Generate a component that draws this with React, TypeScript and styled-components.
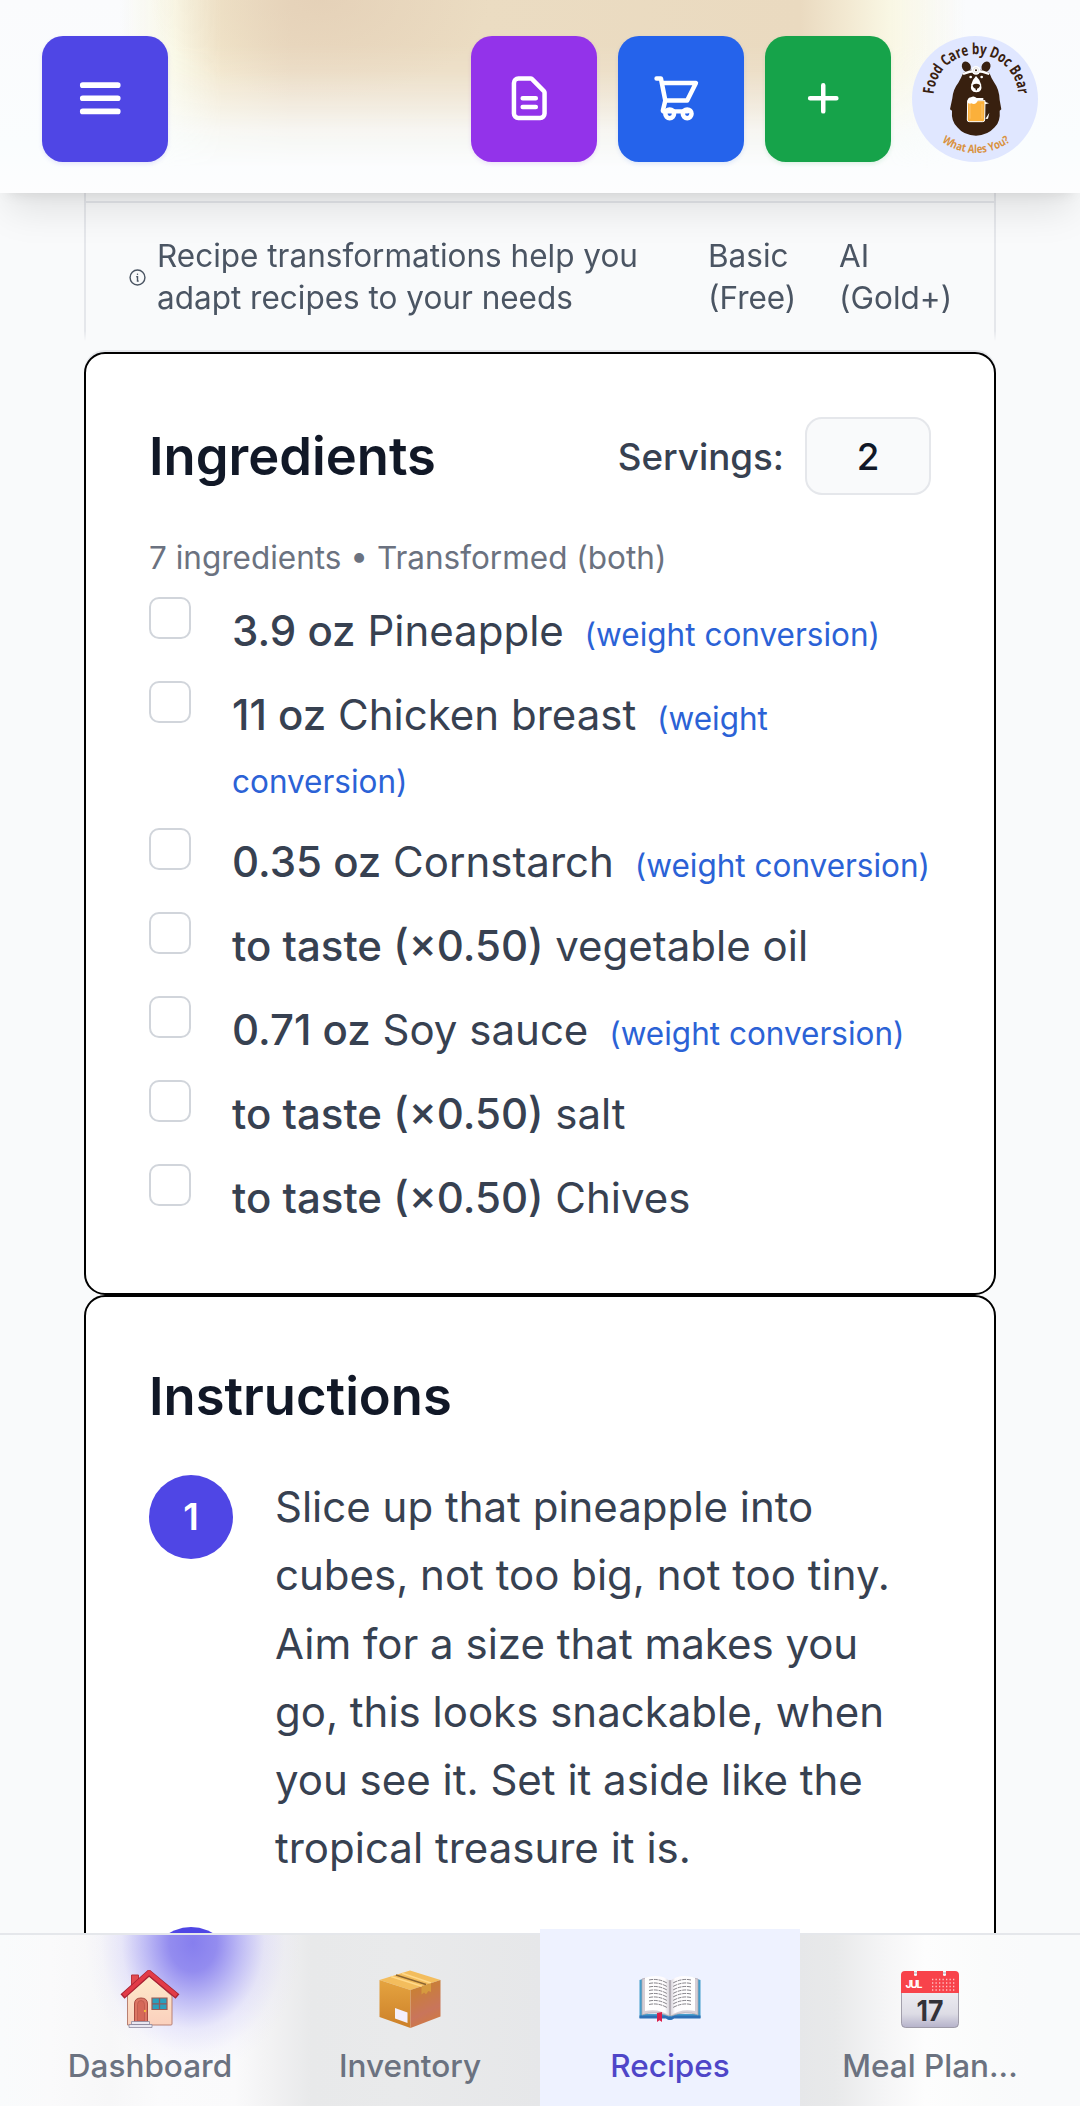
import React from "react";
import styled, { createGlobalStyle, css } from "styled-components";

const GlobalStyle = createGlobalStyle`
  *, *::before, *::after { box-sizing: border-box; }
  body { margin: 0; background: #f9fafb; }
`;

const Screen = styled.div`
  width: 1080px;
  height: 2106px;
  overflow: hidden;
  display: flex;
  flex-direction: column;
  background: #f9fafb;
  font-family: Inter, "Liberation Sans", sans-serif;
  color: #374151;
`;

/* ---------- top bar ---------- */

const TopBar = styled.header`
  position: relative;
  z-index: 2;
  flex: none;
  height: 193px;
  padding: 36px 42px 0;
  display: flex;
  justify-content: space-between;
  background: linear-gradient(#fafbfd, #fafdfe 75%, #fdfdfe);
  box-shadow: 0 25px 36px -8px rgba(0, 0, 0, 0.1), 0 8px 13px -8px rgba(0, 0, 0, 0.1);
`;

const PhotoGlow = styled.div`
  position: absolute;
  inset: 0;
  background:
    radial-gradient(ellipse 170px 100px at 320px 0, rgba(225, 203, 178, 0.6), transparent),
    linear-gradient(90deg, transparent 120px, rgba(249, 247, 226, 0.85) 175px, #f1e5ca 222px,
      #ebdbc2 290px, #ebdcc2 480px, #eadac0 800px, #f3ead3 850px, #f9f7e4 890px, transparent 965px);
  mask-image: linear-gradient(#000 45px, rgba(0, 0, 0, 0.88) 72px, rgba(0, 0, 0, 0.58) 100px,
    rgba(0, 0, 0, 0.2) 130px, transparent 168px);
`;

const Actions = styled.div`
  position: relative;
  display: flex;
  gap: 21px;
`;

const ActionButton = styled.button<{ $color: string; $stroke?: number }>`
  position: relative;
  width: 126px;
  height: 126px;
  padding: 0 10px 2px 0;
  border: 0;
  border-radius: 21px;
  display: grid;
  place-items: center;
  color: #fff;
  background: ${(p) => p.$color};
  box-shadow: 0 2px 4px ${(p) => p.$color}20;

  svg {
    width: 52.5px;
    height: 52.5px;
    fill: none;
    stroke: currentColor;
    stroke-width: ${(p) => p.$stroke ?? 2.05};
    stroke-linecap: round;
    stroke-linejoin: round;
  }
`;

const Avatar = styled.svg`
  width: 126px;
  height: 126px;
  display: block;
`;

/* ---------- scrolled page ---------- */

const Page = styled.main`
  flex: 1;
  min-height: 0;
  overflow: hidden;
  padding: 0 84px;
`;

const TransformPanel = styled.aside`
  height: 159px;
  padding-top: 8px;
  border: solid #e5e7eb;
  border-width: 0 2px;
  mask-image: linear-gradient(#000 138px, transparent 148px);
`;

const TransformNote = styled.div`
  display: flex;
  align-items: center;
  padding: 32px 42px 0 43px;
  border-top: 2px solid #e5e7eb;
  color: #4b5563;
  font-size: 31.5px;
  line-height: 42px;

  svg {
    flex: none;
    width: 17px;
    height: 17px;
    margin-right: 11px;
  }
`;

const NoteText = styled.span`
  width: 500px;
  margin-right: 51px;
`;

const Tier = styled.span<{ $width: number }>`
  width: ${(p) => p.$width}px;
`;

const Card = styled.section`
  padding: 63px;
  border: 2px solid #000;
  border-radius: 21px;
  background: #fff;

  &:first-of-type {
    box-shadow: 0 -2px 0 #e5e7eb;
  }
`;

const CardHeader = styled.div`
  display: flex;
  align-items: center;
  justify-content: space-between;
`;

const Title = styled.h2`
  margin: 0;
  color: #111827;
  font-size: 52.5px;
  font-weight: 600;
  line-height: 72px;
`;

const Servings = styled.label`
  display: flex;
  align-items: center;
  gap: 21px;
  font-size: 36.75px;
  font-weight: 500;
`;

const ServingsInput = styled.input`
  width: 126px;
  height: 78px;
  padding: 0;
  border: 2px solid #e5e7eb;
  border-radius: 17px;
  background: #f9fafb;
  color: #111827;
  font: inherit;
  text-align: center;
`;

const Summary = styled.p`
  margin: 42px 0 20px;
  color: #6b7280;
  font-size: 31.5px;
  line-height: 42px;
`;

const IngredientList = styled.ul`
  margin: 0;
  padding: 0 0 1px;
  list-style: none;
  display: grid;
  gap: 21px;
`;

const Ingredient = styled.li`
  display: flex;
  gap: 41px;
  margin-right: -8px;
  font-size: 42px;
  line-height: 63px;
`;

const Check = styled.input`
  appearance: none;
  flex: none;
  width: 42px;
  height: 42px;
  margin: -2px 0 0;
  border: 2px solid #d1d5db;
  border-radius: 10px;
  background: #fff;
`;

const Amount = styled.span`
  font-weight: 500;
`;

const Conversion = styled.span`
  margin-left: 9px;
  color: #2b62d6;
  font-size: 31.5px;
  line-height: 1;
`;

const Steps = styled.ol`
  margin: 41px 0 0;
  padding: 0;
  list-style: none;
  display: grid;
  gap: 42px;
`;

const Step = styled.li`
  display: flex;
  gap: 42px;
  font-size: 42px;
  line-height: 68.25px;
`;

const StepNumber = styled.span`
  flex: none;
  width: 84px;
  height: 84px;
  margin-top: 2px;
  border-radius: 50%;
  display: grid;
  place-items: center;
  background: #4f46e5;
  color: #fff;
  font-size: 36.75px;
  font-weight: 600;
`;

/* ---------- bottom navigation ---------- */

const TabBar = styled.nav`
  position: relative;
  z-index: 2;
  flex: none;
  height: 173px;
  padding: 0 20px;
  display: grid;
  grid-template-columns: repeat(4, 260px);
  border-top: 2px solid #e5e7eb;
  background:
    radial-gradient(ellipse 108px 130px at 193px 8px, rgba(132, 124, 238, 0.98) 0%, rgba(136, 128, 238, 0.9) 22%,
      rgba(160, 155, 242, 0.66) 44%, rgba(198, 195, 248, 0.34) 66%, rgba(220, 218, 250, 0.12) 85%, transparent),
    linear-gradient(90deg, #f9fbfc 0, #fafafb 50px, #f7f7f8 110px, #fbfbfc 160px, #fafafb 235px, #f1f1f2 275px,
      #e8e9ea 312px, #e9eaeb 400px, #e6e7e9 540px, #e6e7e9 800px, #e8e9ea 835px, #f5f5f6 885px, #fdfdfd 925px,
      #fafbfb 985px, #f9fafb 1030px);
`;

const Tab = styled.a<{ $active?: boolean }>`
  display: flex;
  flex-direction: column;
  align-items: center;
  padding-top: 35px;
  color: #6b7280;
  font-size: 31.5px;
  font-weight: 500;
  line-height: 42px;
  text-decoration: none;

  svg {
    width: 62px;
    height: 58px;
    margin-bottom: 17px;
  }

  ${(p) =>
    p.$active &&
    css`
      margin-top: -6px;
      padding-top: 41px;
      background: #eef2ff;
      color: #4f46c8;
    `}
`;

/* ---------- drawings ---------- */

const BearLogo = () => (
  <Avatar viewBox="36 48 378 378" aria-label="Food Care by Doc Bear">
    <defs>
      <path id="arcTop" d="M101 230 A127 127 0 0 1 355 230" />
      <path id="arcBottom" d="M59 230 A169 169 0 0 0 397 230" />
    </defs>
    <circle cx="225" cy="237" r="189" fill="#e0e7ff" />
    <text fontFamily="Open Sans" fontWeight="700" fontSize="46" fill="#38200f" textAnchor="middle">
      <textPath href="#arcTop" startOffset="50%" textLength="384" lengthAdjust="spacingAndGlyphs">Food Care by Doc Bear</textPath>
    </text>
    <text fontFamily="Open Sans" fontWeight="700" fontSize="34" fill="#d9923f" textAnchor="middle">
      <textPath href="#arcBottom" startOffset="50%" textLength="220" lengthAdjust="spacingAndGlyphs">What Ales You?</textPath>
    </text>
    <g fill="#38200f">
      <ellipse cx="199" cy="140" rx="13" ry="16" transform="rotate(-25 199 140)" />
      <ellipse cx="258" cy="140" rx="13" ry="16" transform="rotate(25 258 140)" />
      <path d="M190 158 Q228 138 268 158 Q274 175 283 188 Q298 208 299 240 L304 268 L299 272 Q302 305 284 322 Q262 347 228 347 Q192 347 172 322 Q153 303 156 272 L150 268 L157 235 Q159 208 175 188 Q184 172 190 158Z" />
    </g>
    <path d="M189 162 Q228 144 268 162" fill="none" stroke="#fff" strokeWidth="7" />
    <circle cx="228" cy="151" r="13" fill="#fff" />
    <circle cx="228" cy="151" r="8" fill="none" stroke="#cfcac6" strokeWidth="1.5" />
    <circle cx="228" cy="151" r="3" fill="#38200f" />
    <circle cx="212" cy="171" r="4" fill="#fff" />
    <circle cx="245" cy="171" r="4" fill="#fff" />
    <path d="M228 168 Q239 178 243 193 Q249 216 229 217 Q208 216 214 193 Q218 178 228 168Z" fill="#fff" />
    <path d="M218 195 Q229 188 240 195 Q239 205 231 206 V211 H227 V206 Q219 205 218 195Z" fill="#38200f" />
    <path d="M203 242 L202 300 Q202 305 208 305 H248 Q254 305 254 300 L255 242Z" fill="#fbb03b" stroke="#fff" strokeWidth="3" />
    <path d="M210 252V296M246 252V296" stroke="#ffd08a" strokeWidth="2" />
    <path d="M203 248 Q200 234 213 232 Q221 226 230 234 H250 V240 H234 Q228 256 214 250 Q209 253 203 248Z" fill="#fff" />
    <path d="M254 245 L267 250 L255 253Z M256 297 L268 278 L264 296Z" fill="#fff" />
  </Avatar>
);

const MenuIcon = () => (
  <svg viewBox="0 0 24 24"><path d="M4 6h16M4 12h16M4 18h16" /></svg>
);
const DocumentIcon = () => (
  <svg viewBox="0 0 24 24">
    <path d="M9 12h6m-6 4h6m2 5H7a2 2 0 01-2-2V5a2 2 0 012-2h5.586a1 1 0 01.707.293l5.414 5.414a1 1 0 01.293.707V19a2 2 0 01-2 2z" />
  </svg>
);
const CartIcon = () => (
  <svg viewBox="0 0 24 24">
    <path d="M3 3h2l.4 2M7 13h10l4-8H5.400M7 13L5.400 5M7 13l-1.100 4.600q0 .4 .5 .4H17" />
    <circle cx="9" cy="19.100" r="2" />
    <circle cx="17" cy="19.100" r="2" />
  </svg>
);
const PlusIcon = () => (
  <svg viewBox="0 0 24 24"><path d="M12 6v12M6 12h12" /></svg>
);
const InfoIcon = () => (
  <svg viewBox="0 0 24 24" fill="none" stroke="currentColor" strokeWidth="2" strokeLinecap="round">
    <circle cx="12" cy="12" r="10.5" />
    <path d="M11 11h1v6h1M12 7.2v.1" />
  </svg>
);

const HouseIcon = () => (
  <svg viewBox="0 0 62 58">
    <defs>
      <linearGradient id="wall" x1="0" y1="0" x2="0" y2="1">
        <stop offset="0" stopColor="#fdebcb" />
        <stop offset="1" stopColor="#fbd0bd" />
      </linearGradient>
    </defs>
    <path d="M12.500 17V5h7v9" fill="#e24a50" stroke="#b9303a" />
    <path d="M8.500 25 L30 6 L53 26 V54 Q53 55 52 55 H8.500Z" fill="url(#wall)" stroke="#b98072" />
    <path d="M3.500 26.500 L30 3 L58.500 26.500" fill="none" stroke="#a92334" strokeWidth="6" />
    <path d="M4.500 25.500 L30 2.500 L57.500 25.500" fill="none" stroke="#e23b47" strokeWidth="4" />
    <path d="M15.500 52V34q0-6 6.500-6t6.500 6v18z" fill="#dc7564" stroke="#a94a40" />
    <path d="M18.500 51V34.500q0-4 3.500-4t3.500 4V51z" fill="#d56858" stroke="#bd594c" strokeWidth=".8" />
    <circle cx="26" cy="41" r="1.200" fill="#f6b93c" />
    <path d="M33 28h15v11.500H33z" fill="#2b9fbd" stroke="#9b5c55" strokeWidth="1.200" />
    <path d="M40.500 28v11.500M33 33.800h15" stroke="#8c5a5c" strokeWidth="1.300" />
    <path d="M12.500 51.500h18v3h-18zM10 54.500h23v3H10z" fill="#e9e7f1" stroke="#8e8aa0" strokeWidth=".8" />
  </svg>
);

const PackageIcon = () => (
  <svg viewBox="0 0 62 58">
    <defs>
      <linearGradient id="boxLeft" x1="0" y1="0" x2="0" y2="1">
        <stop offset="0" stopColor="#e5a440" />
        <stop offset="1" stopColor="#cc8029" />
      </linearGradient>
      <linearGradient id="boxRight" x1="0.200" y1="0" x2="0.500" y2="1">
        <stop offset="0" stopColor="#c9822b" />
        <stop offset=".7" stopColor="#c9755b" />
        <stop offset="1" stopColor="#cf7a42" />
      </linearGradient>
    </defs>
    <path d="M.5 10 L31 .5 L61.500 10 L31.500 20Z" fill="#f3bd5d" />
    <path d="M.5 10 L31.500 20 V58 L.5 47Z" fill="url(#boxLeft)" />
    <path d="M31.500 20 L61.500 10 V46.500 L31.500 58Z" fill="url(#boxRight)" />
    <path d="M12 6.500 L43 16.300 M23 3.200 L52 13" stroke="#ffd98a" strokeWidth="1.500" />
    <path d="M17 5 L47 14.500" stroke="#8b6431" strokeWidth="1.500" />
    <path d="M42.500 16.500 L52 13.300 V22 L49.500 21 L47 24.300 L45 22.500 L42.500 24.500Z" fill="#d69a3f" />
    <path d="M16 38 L28.500 42.500 V53 L16 48.500Z" fill="#f4effa" />
  </svg>
);

const BookIcon = () => (
  <svg viewBox="0 0 62 58">
    <defs>
      <linearGradient id="page" x1="0" y1="0" x2="1" y2="0">
        <stop offset="0" stopColor="#fff" />
        <stop offset=".8" stopColor="#fdfbfd" />
        <stop offset="1" stopColor="#cfcbd3" />
      </linearGradient>
      <linearGradient id="pageRight" x1="1" y1="0" x2="0" y2="0">
        <stop offset="0" stopColor="#fff" />
        <stop offset=".8" stopColor="#fdfbfd" />
        <stop offset="1" stopColor="#cfcbd3" />
      </linearGradient>
    </defs>
    <path d="M.5 10 L4 9 V44 H58 V9 L61.500 10 V48 H35 Q31 51 27 48 H.5Z" fill="#459dcb" />
    <path d="M.5 45.500H27Q31 48 35 45.500H61.500V48.500H35Q31 51.500 27 48.500H.5Z" fill="#2d6fb5" />
    <path d="M3 9 Q15 5 30 11 V46 Q15 40 3 45Z M59 9 Q47 5 32 11 V46 Q47 40 59 45Z" fill="#d6cfd6" stroke="#a9a3ad" strokeWidth=".7" />
    <path d="M6 7.500 Q22 3 31 11 V46 Q20 38 6 41Z" fill="url(#page)" />
    <path d="M56 7.500 Q40 3 31 11 V46 Q42 38 56 41Z" fill="url(#pageRight)" />
    <path d="M31 10V46" stroke="#aaa3ad" strokeWidth="1.500" />
    <path
      d="M10 10q9-2 18 3M10 13.500q9-2 18 3M10 17q9-2 18 3M10 20.500q9-2 18 3M10 24q9-2 18 3M10 27.500q9-2 18 3M10 31q9-2 18 3M10 34.500q9-2 18 3M52 10q-9-2-18 3M52 13.500q-9-2-18 3M52 17q-9-2-18 3M52 20.500q-9-2-18 3M52 24q-9-2-18 3M52 27.500q-9-2-18 3M52 31q-9-2-18 3M52 34.500q-9-2-18 3"
      fill="none" stroke="#77757c" strokeWidth=".9" strokeDasharray="4 .8"
    />
    <path d="M18 43l5-1v10l-2.500-1.800L18 52z" fill="#d91f4b" />
  </svg>
);

const CalendarIcon = () => (
  <svg viewBox="0 0 62 58">
    <defs>
      <linearGradient id="sheet" x1="0" y1="0" x2="0" y2="1">
        <stop offset="0" stopColor="#fbfafc" />
        <stop offset=".75" stopColor="#dddce5" />
        <stop offset="1" stopColor="#b5b2ca" />
      </linearGradient>
    </defs>
    <rect x="2.500" y="3" width="57" height="54.500" rx="4" fill="url(#sheet)" stroke="#8f8c99" strokeWidth=".8" />
    <path d="M2 23V5q0-4 4-4h9v4q0 1 1.500 1T18 5V1h26v4q0 1 1.500 1T47 5V1h9q4 0 4 4v18z" fill="#f8434b" />
    <path d="M33 9.500h24M33 13h24M33 16.500h24M33 20h24" stroke="#ffc2c4" strokeWidth="1.300" strokeDasharray="1.300 2.200" />
    <text x="6.500" y="17.500" fontFamily="Inter" fontWeight="700" fontSize="10.500" fill="#fff" textLength="17">JUL</text>
    <text x="17.500" y="51" fontFamily="Inter" fontWeight="700" fontSize="29" fill="#333238" textLength="27" lengthAdjust="spacingAndGlyphs">17</text>
  </svg>
);

/* ---------- data ---------- */

const ingredients = [
  { amount: "3.9 oz", name: "Pineapple", converted: true },
  { amount: "11 oz", name: "Chicken breast", converted: true },
  { amount: "0.35 oz", name: "Cornstarch", converted: true },
  { amount: "to taste (×0.50)", name: "vegetable oil", converted: false },
  { amount: "0.71 oz", name: "Soy sauce", converted: true },
  { amount: "to taste (×0.50)", name: "salt", converted: false },
  { amount: "to taste (×0.50)", name: "Chives", converted: false },
];

const steps = [
  "Slice up that pineapple into cubes, not too big, not too tiny. Aim for a size that makes you go, this looks snackable, when you see it. Set it aside like the tropical treasure it is.",
  "",
];

const tabs = [
  { label: "Dashboard", icon: <HouseIcon /> },
  { label: "Inventory", icon: <PackageIcon /> },
  { label: "Recipes", icon: <BookIcon />, active: true },
  { label: "Meal Plan...", icon: <CalendarIcon /> },
];

export default function App() {
  return (
    <Screen>
      <GlobalStyle />
      <TopBar>
        <PhotoGlow />
        <ActionButton $color="#4f46e5" $stroke={2.6} aria-label="Menu"><MenuIcon /></ActionButton>
        <Actions>
          <ActionButton $color="#9333ea" aria-label="Document"><DocumentIcon /></ActionButton>
          <ActionButton $color="#2563eb" aria-label="Shopping"><CartIcon /></ActionButton>
          <ActionButton $color="#16a34a" aria-label="Add"><PlusIcon /></ActionButton>
          <BearLogo />
        </Actions>
      </TopBar>

      <Page>
        <TransformPanel>
          <TransformNote>
            <InfoIcon />
            <NoteText>Recipe transformations help you adapt recipes to your needs</NoteText>
            <Tier $width={131}>Basic (Free)</Tier>
            <Tier $width={113}>AI (Gold+)</Tier>
          </TransformNote>
        </TransformPanel>

        <Card>
          <CardHeader>
            <Title>Ingredients</Title>
            <Servings>
              Servings:
              <ServingsInput defaultValue="2" />
            </Servings>
          </CardHeader>
          <Summary>7 ingredients • Transformed (both)</Summary>
          <IngredientList>
            {ingredients.map((item, i) => (
              <Ingredient key={i}>
                <Check type="checkbox" />
                <span>
                  <Amount>{item.amount}</Amount> {item.name}{" "}
                  {item.converted && <Conversion>(weight conversion)</Conversion>}
                </span>
              </Ingredient>
            ))}
          </IngredientList>
        </Card>

        <Card>
          <Title>Instructions</Title>
          <Steps>
            {steps.map((text, i) => (
              <Step key={i}>
                <StepNumber>{text && i + 1}</StepNumber>
                <span>{text}</span>
              </Step>
            ))}
          </Steps>
        </Card>
      </Page>

      <TabBar>
        {tabs.map((tab) => (
          <Tab key={tab.label} $active={tab.active}>
            {tab.icon}
            {tab.label}
          </Tab>
        ))}
      </TabBar>
    </Screen>
  );
}
